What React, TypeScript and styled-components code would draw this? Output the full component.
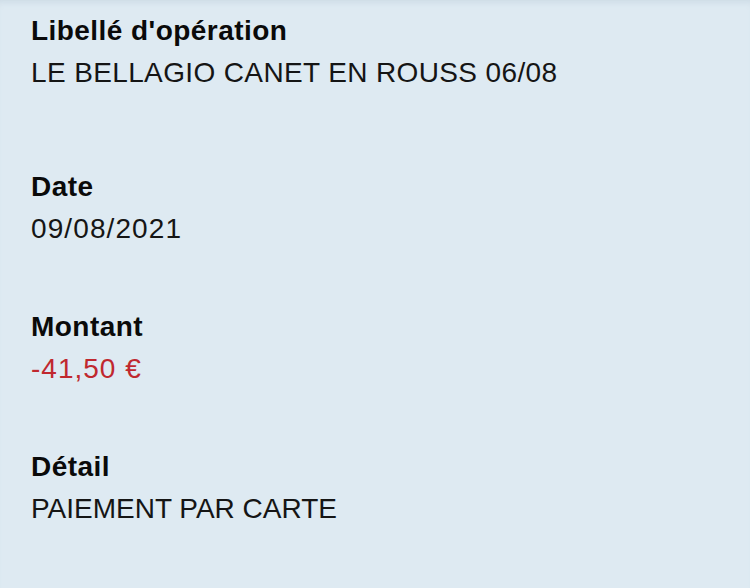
import React from "react";
import styled, { createGlobalStyle } from "styled-components";

const Global = createGlobalStyle`
  html, body { margin: 0; padding: 0; background: #deeaf2; }
  body { font-family: "Liberation Sans", Arial, Helvetica, sans-serif; }
`;

const Page = styled.div`
  width: 750px;
  height: 588px;
  background: #deeaf2;
  box-shadow: inset 0 6px 6px -4px rgba(120, 150, 170, 0.18);
  padding: 0 31px;
  box-sizing: border-box;
  display: flex;
  flex-direction: column;
  overflow: hidden;
`;

const Field = styled.section<{ $gap: number }>`
  display: flex;
  flex-direction: column;
  margin-top: ${(p) => p.$gap}px;
`;

const Label = styled.div`
  font-size: 28px;
  line-height: 42px;
  font-weight: 700;
  letter-spacing: 0.45px;
  color: #0a0a0a;
`;

const Value = styled.div<{ $negative?: boolean; $spacing: number }>`
  font-size: 28px;
  line-height: 42px;
  font-weight: 400;
  letter-spacing: ${(p) => p.$spacing}px;
  color: ${(p) => (p.$negative ? "#c0282f" : "#151515")};
`;

const fields = [
  { label: "Libellé d'opération", value: "LE BELLAGIO CANET EN ROUSS 06/08", gap: 10, spacing: 0.37 },
  { label: "Date", value: "09/08/2021", gap: 72, spacing: 1.1 },
  { label: "Montant", value: "-41,50 €", gap: 56, negative: true, spacing: 1 },
  { label: "Détail", value: "PAIEMENT PAR CARTE", gap: 56, spacing: 0 },
];

export default function App() {
  return (
    <>
      <Global />
      <Page>
        {fields.map((f) => (
          <Field key={f.label} $gap={f.gap}>
            <Label>{f.label}</Label>
            <Value $negative={f.negative} $spacing={f.spacing}>
              {f.value}
            </Value>
          </Field>
        ))}
      </Page>
    </>
  );
}
